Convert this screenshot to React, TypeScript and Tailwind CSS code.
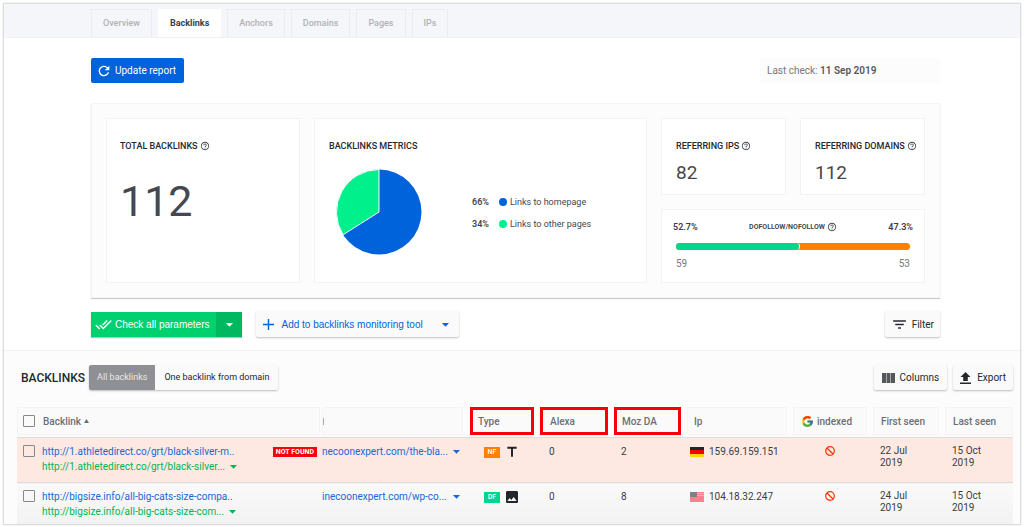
import { useState } from "react";
import clsx from "clsx";
import { FcGoogle } from "react-icons/fc";
import {
  MdArrowDropDown,
  MdDoneAll,
  MdFilterList,
  MdHelpOutline,
  MdImage,
  MdRefresh,
  MdTitle,
} from "react-icons/md";

const tabs = ["Overview", "Backlinks", "Anchors", "Domains", "Pages", "IPs"];

type Row = {
  id: string;
  source: string;
  target: string;
  page: string;
  notFound: boolean;
  follow: "NF" | "DF";
  kind: "text" | "image";
  alexa: number;
  moz: number;
  country: "de" | "us";
  ip: string;
  firstSeen: [string, string];
  lastSeen: [string, string];
};

const rows: Row[] = [
  {
    id: "athletedirect",
    source: "http://1.athletedirect.co/grt/black-silver-m..",
    target: "http://1.athletedirect.co/grt/black-silver...",
    page: "necoonexpert.com/the-bla...",
    notFound: true,
    follow: "NF",
    kind: "text",
    alexa: 0,
    moz: 2,
    country: "de",
    ip: "159.69.159.151",
    firstSeen: ["22 Jul", "2019"],
    lastSeen: ["15 Oct", "2019"],
  },
  {
    id: "bigsize",
    source: "http://bigsize.info/all-big-cats-size-compa..",
    target: "http://bigsize.info/all-big-cats-size-com...",
    page: "inecoonexpert.com/wp-co...",
    notFound: false,
    follow: "DF",
    kind: "image",
    alexa: 0,
    moz: 8,
    country: "us",
    ip: "104.18.32.247",
    firstSeen: ["24 Jul", "2019"],
    lastSeen: ["15 Oct", "2019"],
  },
];

const card = "bg-white border border-[#f3f3f3]";
const cardTitle =
  "flex items-center gap-[2px] text-[9px] leading-3 font-medium text-[#24282e] whitespace-nowrap";
const raised =
  "flex items-center bg-[#fafafa] rounded-xs shadow-[0_1px_2px_rgba(0,0,0,0.25)] whitespace-nowrap";
const headCell = "flex items-center h-7 mx-[3px] whitespace-nowrap";
const plainHead = "border border-[#f4f4f4] bg-[#fafafa]";
const markedHead = "border-3 border-[#f6000c] bg-[#fafafa]";
const checkbox =
  "appearance-none size-3 shrink-0 bg-transparent border border-[#85888d] rounded-[1px]";

function Help() {
  return <MdHelpOutline size={10} className="shrink-0 text-[#44484e]" />;
}

function Pie() {
  return (
    <svg viewBox="0 0 86 86" className="size-[86px] shrink-0">
      <circle cx="43" cy="43" r="42.5" fill="#0063db" />
      <path
        d="M43 43 V0.5 A42.5 42.5 0 0 0 7.1 65.8 Z"
        fill="#00f08c"
        stroke="#fff"
        strokeWidth="1"
      />
    </svg>
  );
}

function NotIndexed() {
  return (
    <svg
      viewBox="0 0 10 10"
      role="img"
      aria-label="Not indexed"
      className="size-[10px] mx-auto"
      fill="none"
      stroke="#ff3300"
      strokeWidth="1.2"
    >
      <circle cx="5" cy="5" r="4.3" />
      <path d="M2 2L8 8" />
    </svg>
  );
}

function Flag({ country }: { country: "de" | "us" }) {
  if (country === "de") {
    return (
      <svg viewBox="0 0 14 10" className="w-[14px] h-[10px] shrink-0">
        <rect width="14" height="4" fill="#22252b" />
        <rect y="3" width="14" height="4" fill="#f30000" />
        <rect y="7" width="14" height="3" fill="#ffd400" />
      </svg>
    );
  }
  return (
    <svg viewBox="0 0 14 10" className="w-[14px] h-[10px] shrink-0">
      <rect width="14" height="10" fill="#ff7f92" />
      <path d="M7 1.5h7M7 3.5h7" stroke="#ffb3be" strokeWidth="0.8" />
      <rect width="7" height="5" fill="#80808a" />
    </svg>
  );
}

function Summary() {
  return (
    <section className="mt-5 p-[14px] grid grid-cols-[194fr_333fr_264fr] gap-[14px] bg-[#fcfcfc] border border-[#f5f5f5] shadow-[0_1px_1px_rgba(0,0,0,0.2)]">
      <div className={clsx(card, "px-[13px] pt-[21px] h-[165px]")}>
        <h2 className={cardTitle}>
          TOTAL BACKLINKS <Help />
        </h2>
        <p className="mt-[23px] text-[43px] leading-[52px] text-[#444951]">112</p>
      </div>

      <div className={clsx(card, "px-[14px] pt-[21px]")}>
        <h2 className={cardTitle}>BACKLINKS METRICS</h2>
        <div className="mt-[17px] pl-[7px] flex items-center gap-[50px]">
          <Pie />
          <ul className="pt-[2px] flex flex-col gap-2 text-[9px] leading-[14px] text-[#44484e]">
            <li className="flex items-center">
              <b className="w-[27px] font-semibold">66%</b>
              <span className="size-2 mr-[3px] rounded-full bg-[#0063db]" />
              Links to homepage
            </li>
            <li className="flex items-center">
              <b className="w-[27px] font-semibold">34%</b>
              <span className="size-2 mr-[3px] rounded-full bg-[#00f08c]" />
              Links to other pages
            </li>
          </ul>
        </div>
      </div>

      <div className="grid grid-cols-2 grid-rows-[77px_74px] gap-[14px]">
        <div className={clsx(card, "pl-[14px] pt-[21px]")}>
          <h2 className={cardTitle}>
            REFERRING IPS <Help />
          </h2>
          <p className="mt-[9px] text-[19px] leading-6 text-[#44484e]">82</p>
        </div>
        <div className={clsx(card, "pl-[14px] pt-[21px]")}>
          <h2 className={cardTitle}>
            REFERRING DOMAINS <Help />
          </h2>
          <p className="mt-[9px] text-[19px] leading-6 text-[#44484e]">112</p>
        </div>
        <div className={clsx(card, "col-span-2 px-[11px] pt-[11px]")}>
          <div className="flex items-center justify-between text-[9px] leading-3 font-semibold text-[#3a3e44]">
            <span>52.7%</span>
            <span className="flex items-center gap-[2px] text-[7px] font-semibold">
              DOFOLLOW/NOFOLLOW <Help />
            </span>
            <span>47.3%</span>
          </div>
          <div className="mt-[10px] mx-[3px] h-[7px] flex rounded-full overflow-hidden bg-[#ff8000]">
            <div
              className="bg-[#00d68b] rounded-r-full border-r border-white"
              style={{ width: "53%" }}
            />
          </div>
          <div className="mt-[7px] mx-[3px] flex justify-between text-[10px] leading-[14px] text-[#77797d]">
            <span>59</span>
            <span>53</span>
          </div>
        </div>
      </div>
    </section>
  );
}

function BacklinkTable() {
  return (
    <table className="mt-[17px] w-full table-fixed border-collapse text-[10px] text-[#3a3e44]">
      <colgroup>
        <col />
        <col className="w-[147px]" />
        <col className="w-[70px]" />
        <col className="w-[74px]" />
        <col className="w-[73px]" />
        <col className="w-[106px]" />
        <col className="w-[80px]" />
        <col className="w-[72px]" />
        <col className="w-[71px]" />
      </colgroup>
      <thead className="text-[#6d6f73] text-left">
        <tr>
          <th className="p-0 pb-[2px] font-medium">
            <div className={clsx("flex items-center h-7 pl-[5px] gap-2", plainHead)}>
              <input type="checkbox" aria-label="Select all" className={checkbox} />
              <span className="flex items-center gap-[3px]">
                Backlink
                <svg viewBox="0 0 5 4" className="w-[5px] h-1" fill="currentColor">
                  <path d="M2.5 0L5 4H0z" />
                </svg>
              </span>
            </div>
          </th>
          <th className="p-0 pb-[2px] font-medium">
            <div className={clsx("flex items-center h-7 ml-[2px] mr-1", plainHead)}>
              <span className="w-px h-[7px] bg-[#aaacb0]" />
            </div>
          </th>
          <th className="p-0 pb-[2px] font-medium">
            <div className={clsx(headCell, markedHead, "px-[5px]")}>Type</div>
          </th>
          <th className="p-0 pb-[2px] font-medium">
            <div className={clsx(headCell, markedHead, "px-[7px]")}>Alexa</div>
          </th>
          <th className="p-0 pb-[2px] font-medium">
            <div className={clsx(headCell, markedHead, "px-[5px]")}>Moz DA</div>
          </th>
          <th className="p-0 pb-[2px] font-medium">
            <div className={clsx(headCell, plainHead, "px-[6px]")}>Ip</div>
          </th>
          <th className="p-0 pb-[2px] font-medium">
            <div className={clsx(headCell, plainHead, "px-[7px] gap-[3px]")}>
              <FcGoogle size={13} className="shrink-0" />
              indexed
            </div>
          </th>
          <th className="p-0 pb-[2px] font-medium">
            <div className={clsx(headCell, plainHead, "px-[7px]")}>First seen</div>
          </th>
          <th className="p-0 pb-[2px] font-medium">
            <div className={clsx(headCell, plainHead, "px-[7px] mr-0")}>Last seen</div>
          </th>
        </tr>
      </thead>
      <tbody>
        {rows.map((row) => (
          <tr
            key={row.id}
            className={clsx(
              "align-top border-t border-[#dcdcdc]",
              row.notFound ? "bg-[#fee8e2]" : "bg-linear-to-b from-[#fafafa] to-[#f2f2f2]"
            )}
          >
            <td className={clsx("p-0 pt-[6px] pl-[6px]", row.notFound ? "pb-[8px]" : "pb-[5px]")}>
              <div className="flex gap-[7px]">
                <input
                  type="checkbox"
                  aria-label={`Select ${row.source}`}
                  className={clsx(checkbox, "mt-px")}
                />
                <div className="flex-1 leading-[15px] whitespace-nowrap">
                  <div className="flex items-center justify-between">
                    <a href="#source" className="text-[#1668d6]">
                      {row.source}
                    </a>
                    {row.notFound && (
                      <span className="mr-[3px] px-[3px] h-[10px] bg-[#f6000c] text-white text-[7px] leading-[10px] font-bold">
                        NOT FOUND
                      </span>
                    )}
                  </div>
                  <a href="#target" className="flex items-center text-[#00b353]">
                    {row.target}
                    <MdArrowDropDown size={17} className="-my-px" />
                  </a>
                </div>
              </div>
            </td>
            <td className="p-0 pt-[6px] pl-[2px] pr-[2px]">
              <a
                href="#page"
                className="flex items-center justify-between leading-[15px] whitespace-nowrap text-[#1668d6]"
              >
                {row.page}
                <MdArrowDropDown size={17} className="-my-px shrink-0" />
              </a>
            </td>
            <td className="p-0 pt-[6px] pl-[17px]">
              <div className="flex items-center gap-1 h-4">
                <span
                  className={clsx(
                    "w-4 h-[11px] text-white text-[7px] leading-[11px] font-medium text-center",
                    row.follow === "NF" ? "bg-[#ff8000]" : "bg-[#00d68b]"
                  )}
                >
                  {row.follow}
                </span>
                {row.kind === "text" ? (
                  <MdTitle size={16} className="text-[#22252b]" />
                ) : (
                  <MdImage size={16} className="text-[#22252b]" />
                )}
              </div>
            </td>
            <td className="p-0 pt-[6px] pl-3 leading-[15px]">{row.alexa}</td>
            <td className="p-0 pt-[6px] pl-[10px] leading-[15px]">{row.moz}</td>
            <td className="p-0 pt-[6px] pl-[6px]">
              <div className="flex items-center gap-[5px] leading-[15px]">
                <Flag country={row.country} />
                {row.ip}
              </div>
            </td>
            <td className="p-0 pt-2">
              <NotIndexed />
            </td>
            <td className="p-0 pt-[7px] pl-[10px] leading-3">
              {row.firstSeen[0]}
              <br />
              {row.firstSeen[1]}
            </td>
            <td className="p-0 pt-[7px] pl-[10px] leading-3">
              {row.lastSeen[0]}
              <br />
              {row.lastSeen[1]}
            </td>
          </tr>
        ))}
      </tbody>
    </table>
  );
}

export default function App() {
  const [activeTab, setActiveTab] = useState("Backlinks");

  return (
    <div className="bg-white p-[3px] font-[Roboto,sans-serif]">
      <main className="border border-[#dcdde0] shadow-[0_0_2px_rgba(0,0,0,0.12)]">
        <nav className="pt-[5px] pl-[87px] flex gap-[6px] bg-[#f5f6fa] text-[9px]">
          {tabs.map((tab) => (
            <a
              key={tab}
              href={`#${tab}`}
              onClick={() => setActiveTab(tab)}
              className={clsx(
                "h-7 px-[11px] flex items-center border-x border-t",
                tab === activeTab
                  ? "bg-white border-white text-[#3a3e44] font-bold"
                  : "border-[#ececee] text-[#b0b2b5] font-medium"
              )}
            >
              {tab}
            </a>
          ))}
        </nav>

        <div className="pt-5 pb-[13px] pl-[87px] pr-20 border-t border-[#f1f1f3]">
          <div className="flex items-center justify-between">
            <button className="h-[25px] pl-[5px] pr-2 flex items-center gap-[3px] bg-[#0063db] text-white text-[10px] rounded-xs">
              <MdRefresh size={16} />
              Update report
            </button>
            <p className="w-[180px] h-[25px] px-[7px] bg-[#fcfcfc] text-[10px] leading-[25px] text-[#77797d]">
              Last check: <b className="font-semibold text-[#55585d]">11 Sep 2019</b>
            </p>
          </div>

          <Summary />

          <div className="mt-[13px] flex items-center justify-between">
            <div className="flex items-center gap-[14px] font-['Liberation_Sans',sans-serif] text-[10px]">
              <div className="flex shadow-[0_1px_1px_rgba(0,0,0,0.25)] text-white">
                <button className="h-[25px] pl-1 pr-[7px] flex items-center gap-[3px] bg-[#00d06e]">
                  <MdDoneAll size={17} />
                  Check all parameters
                </button>
                <button
                  aria-label="More checks"
                  className="w-[26px] h-[25px] flex items-center justify-center bg-[#00b860]"
                >
                  <MdArrowDropDown size={17} />
                </button>
              </div>
              <button className={clsx(raised, "h-[26px] pl-[7px] pr-[5px] text-[#0063db]")}>
                <svg viewBox="0 0 11 11" className="size-[11px] mr-[7px]">
                  <path d="M5.5 0V11M0 5.5H11" stroke="currentColor" strokeWidth="1.4" />
                </svg>
                Add to backlinks monitoring tool
                <MdArrowDropDown size={17} className="ml-[14px]" />
              </button>
            </div>
            <button className={clsx(raised, "h-[26px] px-[6px] gap-1 text-[10px] text-[#24282e]")}>
              <MdFilterList size={17} />
              Filter
            </button>
          </div>
        </div>

        <section className="pl-[13px] pr-[7px] pt-[14px] border-t border-[#f2f2f2] bg-[#fcfcfc]">
          <div className="flex items-center justify-between">
            <div className="flex items-center pl-1">
              <h2 className="mr-1 text-[12px] font-medium text-[#24282e]">BACKLINKS</h2>
              <div className="flex text-[9px] rounded-xs shadow-[0_1px_2px_rgba(0,0,0,0.25)]">
                <button className="h-[25px] px-2 bg-[#8f9094] text-[#e9e9ea] rounded-l-xs">
                  All backlinks
                </button>
                <button className="h-[25px] px-[9px] bg-[#fafafa] text-[#24282e] rounded-r-xs">
                  One backlink from domain
                </button>
              </div>
            </div>
            <div className="flex gap-[6px] text-[10px] text-[#24282e]">
              <button className={clsx(raised, "h-[25px] px-2 gap-[5px]")}>
                <svg viewBox="0 0 13 10" className="w-[13px] h-[10px]" fill="#55575b">
                  <rect width="4" height="10" />
                  <rect x="4.5" width="4" height="10" />
                  <rect x="9" width="4" height="10" />
                </svg>
                Columns
              </button>
              <button className={clsx(raised, "h-[25px] px-[7px] gap-[6px]")}>
                <svg viewBox="0 0 11 12" className="w-[11px] h-3" fill="currentColor">
                  <path d="M5.5 0L10.5 5H7.8V9H3.2V5H.5zM0 10.4h11V12H0z" />
                </svg>
                Export
              </button>
            </div>
          </div>
          <BacklinkTable />
        </section>
      </main>
    </div>
  );
}
